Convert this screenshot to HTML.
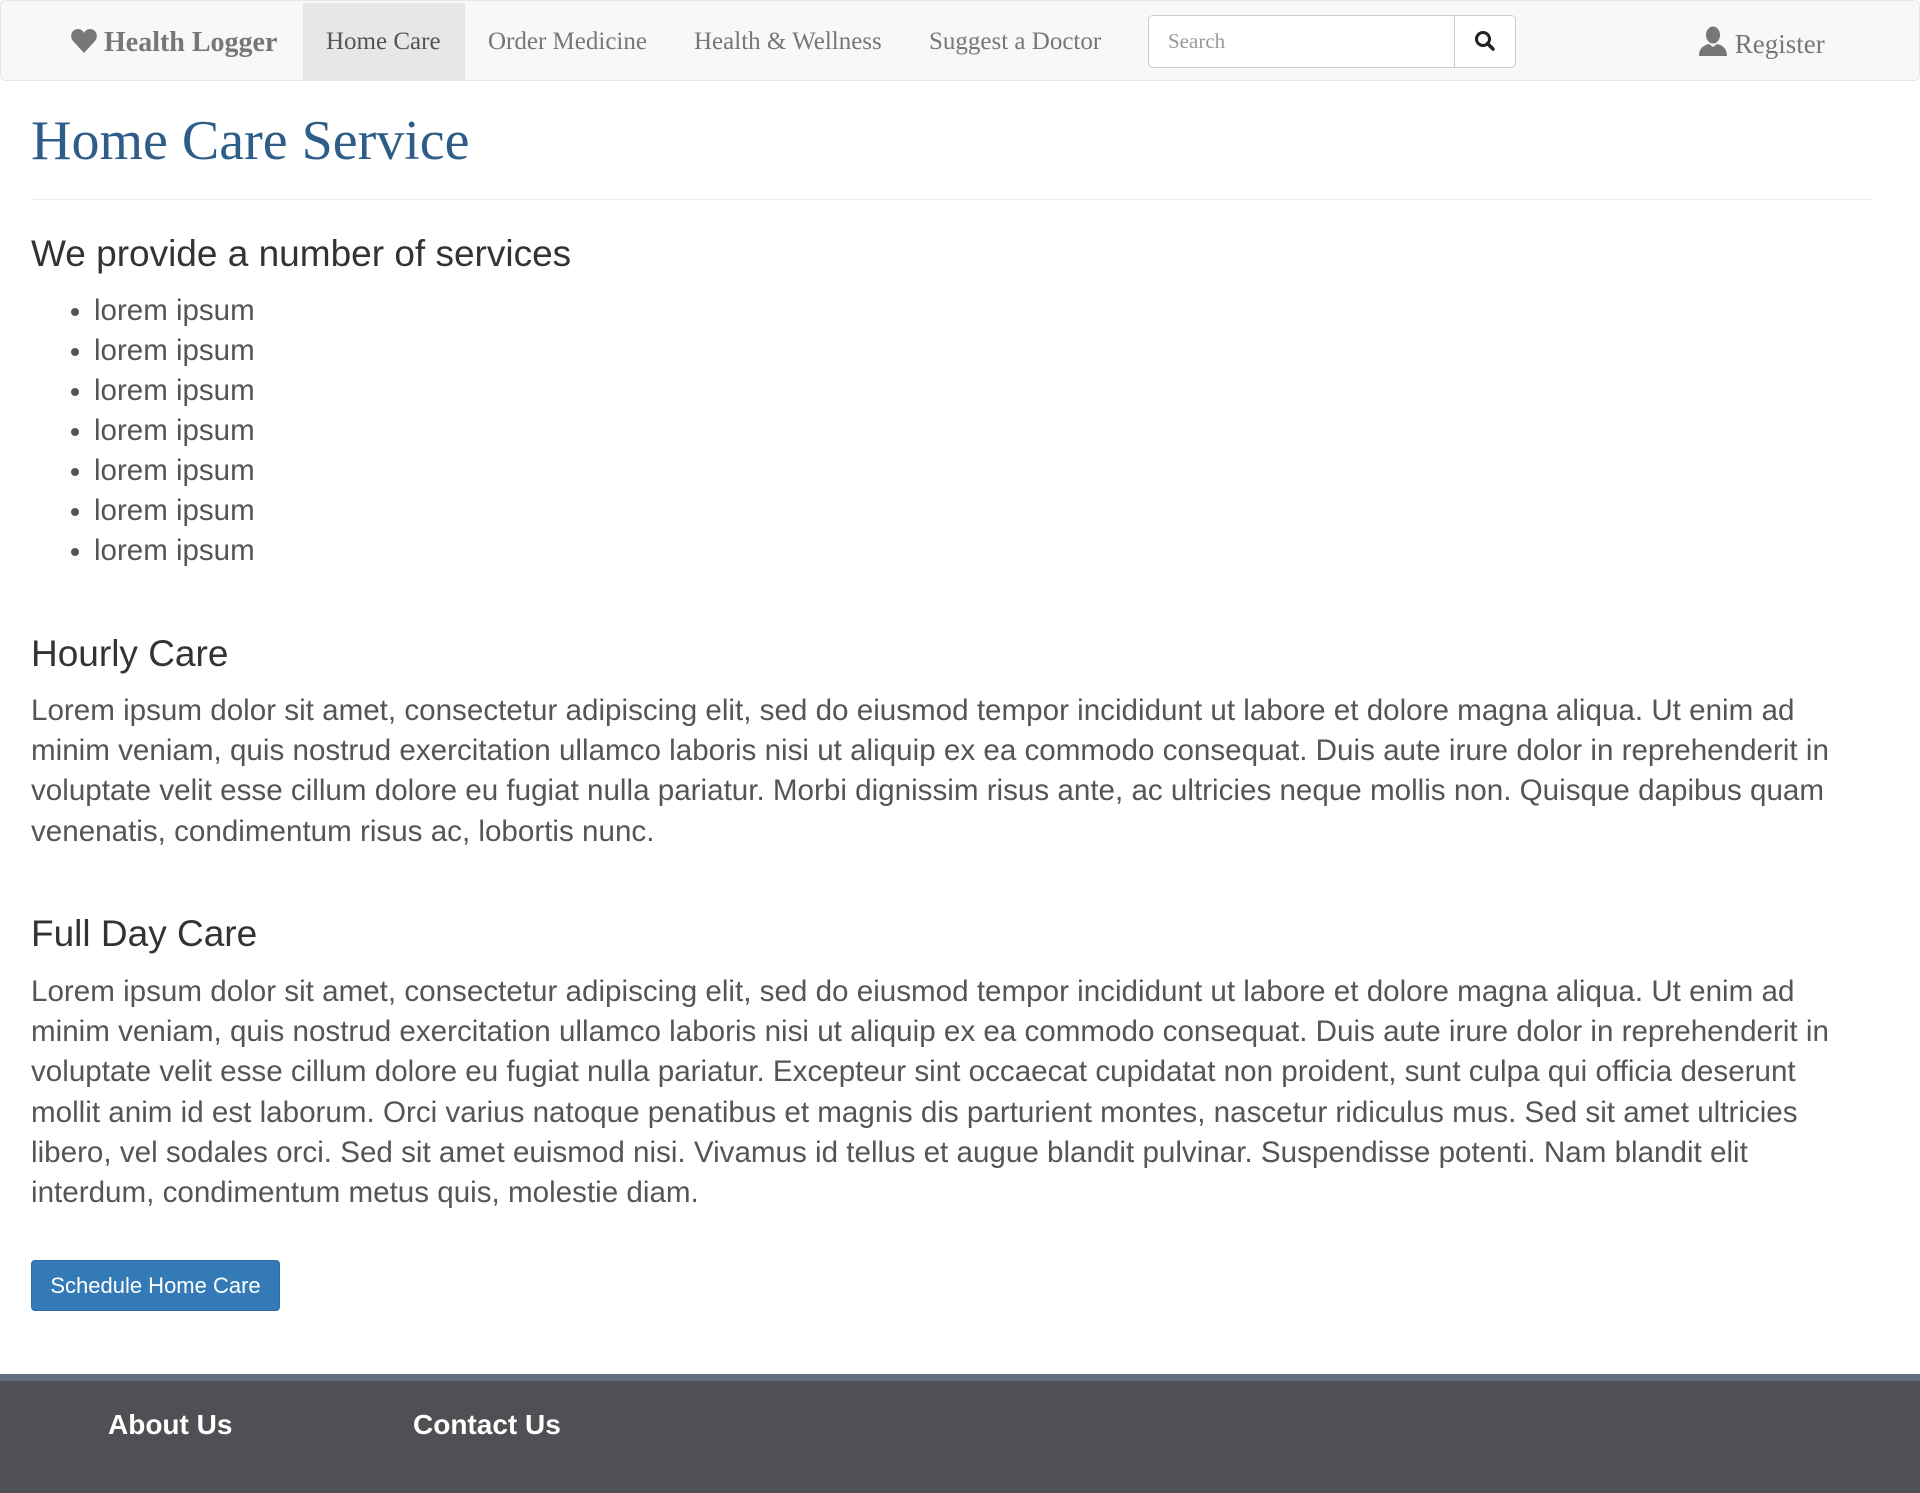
<!DOCTYPE html>
<html><head><meta charset="utf-8"><style>
*{margin:0;padding:0;box-sizing:border-box}
body{width:1920px;height:1493px;background:#fff;position:relative;overflow:hidden;font-family:"Liberation Sans",Arial,sans-serif}
.nav{position:absolute;left:0;top:0;width:1920px;height:81px;background:#f8f8f8;border:1px solid #e7e7e7;border-radius:5px}
.nav .t{position:absolute;font-family:"Liberation Serif",serif;font-size:25px;color:#777;top:27px}
.brand{font-weight:bold;font-size:28px!important;top:26px!important}
.active{position:absolute;left:302px;top:2px;width:162px;height:77px;background:#e7e7e7}
.search{position:absolute;left:1147px;top:14px;width:368px;height:53px;border:1px solid #ccc;border-radius:5px;background:#fff}
.search .btn{position:absolute;left:305px;top:0;width:62px;height:51px;border-left:1px solid #ccc}
.search span{position:absolute;left:19px;top:13px;font-family:"Liberation Serif",serif;font-size:21px;color:#999}
h1{position:absolute;left:31px;top:108px;font-family:"Liberation Serif",serif;font-weight:normal;font-size:56px;color:#2f5d8a;line-height:66px}
hr{position:absolute;left:31px;top:199px;width:1842px;border:0;border-top:1px solid #eee}
h3{position:absolute;left:31px;font-weight:normal;font-size:37px;color:#333;line-height:40px}
ul{position:absolute;left:94px;top:291px;font-size:29.5px;line-height:40px;color:#555;list-style:disc}
ul li::marker{font-size:28px}
p{position:absolute;left:31px;width:1815px;font-size:29.6px;line-height:40.2px;color:#555}
.b{position:absolute;left:31px;top:1260px;width:249px;height:51px;background:#337ab7;border:1px solid #2e6da4;border-radius:4px;color:#fff;font-size:22px;text-align:center;line-height:49px}
.foot{position:absolute;left:0;top:1374px;width:1920px;height:119px;background:#4f4f54;border-top:7px solid #5f6d7e}
.foot div{position:absolute;top:28px;font-weight:bold;color:#fff;font-size:28px}
</style></head><body>
<div class="nav">
<div class="active"></div>
<div class="t brand" style="left:70px"><svg width="26" height="24" viewBox="0 0 26 24" style="vertical-align:-2px"><path d="M13 24 L2 12 C-2 7 1 0 7 0 C10 0 12 2 13 4 C14 2 16 0 19 0 C25 0 28 7 24 12 Z" fill="#777"/></svg> Health Logger</div>
<div class="t" style="left:325px;color:#555">Home Care</div>
<div class="t" style="left:487px">Order Medicine</div>
<div class="t" style="left:693px">Health &amp; Wellness</div>
<div class="t" style="left:928px">Suggest a Doctor</div>
<div class="search"><span>Search</span><div class="btn"><svg width="24" height="24" viewBox="0 0 24 24" style="position:absolute;left:18px;top:13px"><circle cx="10" cy="10" r="6.5" fill="none" stroke="#222" stroke-width="3"/><path d="M14.5 14.5 L20 20" stroke="#222" stroke-width="3.5" stroke-linecap="round"/></svg></div></div>
<div class="t" style="left:1697px;top:25px;font-size:27px"><svg width="30" height="30" viewBox="0 0 30 30" style="vertical-align:-3px"><ellipse cx="15" cy="9" rx="7" ry="8.5" fill="#777"/><path d="M1 30 C1 22 6 19 11 18 L15 21 L19 18 C24 19 29 22 29 30 Z" fill="#777"/></svg> Register</div>
</div>
<h1>Home Care Service</h1>
<hr>
<h3 style="top:234px">We provide a number of services</h3>
<ul><li>lorem ipsum</li><li>lorem ipsum</li><li>lorem ipsum</li><li>lorem ipsum</li><li>lorem ipsum</li><li>lorem ipsum</li><li>lorem ipsum</li></ul>
<h3 style="top:634px">Hourly Care</h3>
<p style="top:691px">Lorem ipsum dolor sit amet, consectetur adipiscing elit, sed do eiusmod tempor incididunt ut labore et dolore magna aliqua. Ut enim ad minim veniam, quis nostrud exercitation ullamco laboris nisi ut aliquip ex ea commodo consequat. Duis aute irure dolor in reprehenderit in voluptate velit esse cillum dolore eu fugiat nulla pariatur. Morbi dignissim risus ante, ac ultricies neque mollis non. Quisque dapibus quam venenatis, condimentum risus ac, lobortis nunc.</p>
<h3 style="top:914px">Full Day Care</h3>
<p style="top:972px">Lorem ipsum dolor sit amet, consectetur adipiscing elit, sed do eiusmod tempor incididunt ut labore et dolore magna aliqua. Ut enim ad minim veniam, quis nostrud exercitation ullamco laboris nisi ut aliquip ex ea commodo consequat. Duis aute irure dolor in reprehenderit in voluptate velit esse cillum dolore eu fugiat nulla pariatur. Excepteur sint occaecat cupidatat non proident, sunt culpa qui officia deserunt mollit anim id est laborum. Orci varius natoque penatibus et magnis dis parturient montes, nascetur ridiculus mus. Sed sit amet ultricies libero, vel sodales orci. Sed sit amet euismod nisi. Vivamus id tellus et augue blandit pulvinar. Suspendisse potenti. Nam blandit elit interdum, condimentum metus quis, molestie diam.</p>
<div class="b">Schedule Home Care</div>
<div class="foot"><div style="left:108px">About Us</div><div style="left:413px">Contact Us</div></div>
</body></html>
